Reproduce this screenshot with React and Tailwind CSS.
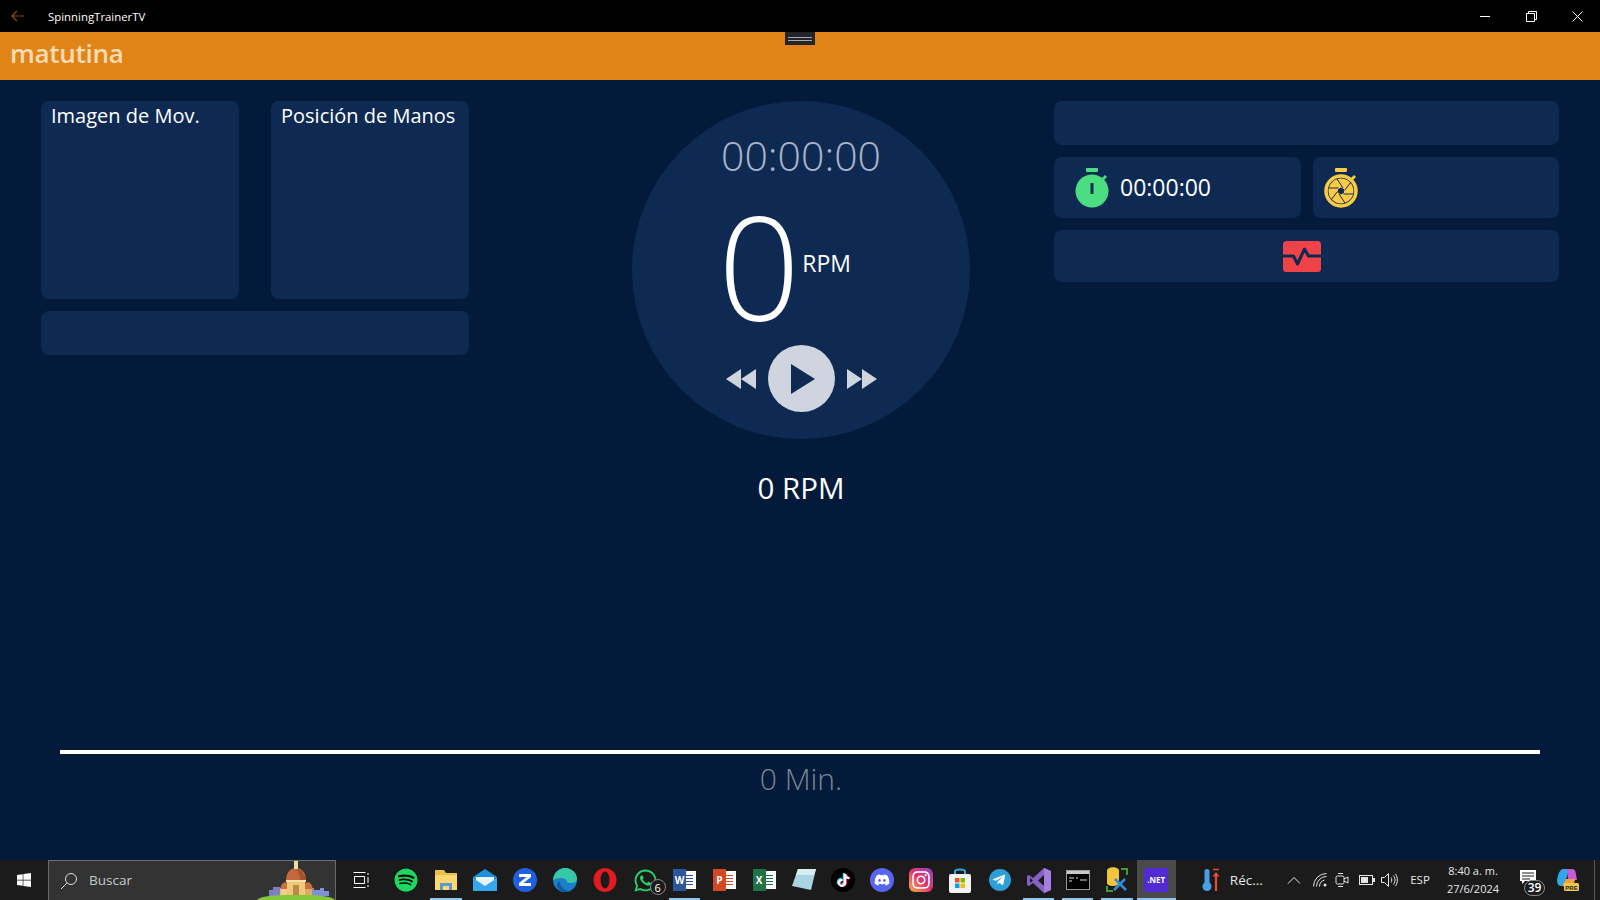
import { FaSpotify, FaWhatsapp, FaTiktok, FaDiscord, FaInstagram, FaTelegramPlane, FaWindows } from 'react-icons/fa'

const font = { fontFamily: '"Open Sans", sans-serif' }

function GreenWatch() {
  return (
    <svg width="34" height="40" viewBox="0 0 34 40">
      <rect x="11" y="0" width="12" height="4" rx="1" fill="#4ade80" />
      <path d="M27 10l3-3 2 2-3 3z" fill="#4ade80" />
      <circle cx="17" cy="23" r="16.5" fill="#4ade80" />
      <rect x="15.500" y="15" width="3" height="11" fill="#0f2a52" />
    </svg>
  )
}

function YellowWatch() {
  return (
    <svg width="34" height="40" viewBox="0 0 34 40">
      <rect x="11" y="0" width="12" height="4" rx="1" fill="#facc45" />
      <path d="M27 10l3-3 2 2-3 3z" fill="#facc45" />
      <circle cx="17" cy="23" r="15" fill="#0f2a52" stroke="#facc45" strokeWidth="3.500" />
      <circle cx="17" cy="23" r="12.500" fill="#facc45" />
      <g stroke="#0f2a52" strokeWidth="1">
        <path d="M19 20L13 11" />
        <path d="M20.500 22.500L27 14" />
        <path d="M19.500 26L29 26" />
        <path d="M15 26L21 35" />
        <path d="M13.500 23.500L7 32" />
        <path d="M14.500 20L5 20" />
      </g>
      <path d="M17 19.500l3 1.750v3.500l-3 1.750-3-1.750v-3.500z" fill="#0f2a52" />
    </svg>
  )
}

function HeartRate() {
  return (
    <svg width="38" height="31" viewBox="0 0 38 31">
      <rect x="0" y="0" width="38" height="31" rx="3.500" fill="#ef4349" />
      <path d="M0 15h10.500l4 8 7-15 4 7H38" fill="none" stroke="#0f2a52" strokeWidth="3" strokeLinejoin="round" />
    </svg>
  )
}

function Church() {
  return (
    <svg width="78" height="41" viewBox="0 0 78 41">
      <path d="M12 37V31h4v-3h7v3h5v6z" fill="#7d7fc4" />
      <path d="M52 37V29h5v2h6v-2h4v3h5v5z" fill="#7f92d6" />
      <rect x="23" y="29" width="32" height="8" fill="#e3bc6a" />
      <rect x="24" y="29" width="9" height="8" fill="#efd28a" />
      <rect x="46" y="29" width="9" height="8" fill="#d9ae5e" />
      <path d="M23.500 30c0-9 10-9 10 0z" fill="#c9713e" />
      <path d="M45.500 30c0-9 10-9 10 0z" fill="#c9713e" />
      <rect x="30" y="21" width="18" height="16" fill="#edc979" />
      <path d="M29 21c0-16 20-16 20 0z" fill="#c4673a" />
      <path d="M39 9c5 2 9 6 10 12h-6c0-5-2-9-4-12z" fill="#a84f2e" />
      <rect x="29" y="21" width="20" height="2" fill="#f6e2a8" />
      <rect x="37" y="2" width="4" height="8" fill="#eadfa8" />
      <rect x="36" y="26" width="6" height="10" fill="#b98a4a" />
      <path d="M0 41c4-4 16-5 39-5s35 1 39 5z" fill="#86c83c" />
    </svg>
  )
}

function Folder() {
  return (
    <svg width="24" height="22" viewBox="0 0 24 22">
      <path d="M1 1h9l2 3h11v17H1z" fill="#eabf4a" />
      <rect x="1" y="6" width="22" height="15" fill="#fbd970" />
      <rect x="6" y="14" width="12" height="7" fill="#5e9ad6" />
      <rect x="9" y="17" width="6" height="4" fill="#fbd970" />
    </svg>
  )
}

function Mail() {
  return (
    <svg width="26" height="22" viewBox="0 0 26 22">
      <path d="M1 8L13 0l12 8v14H1z" fill="#1c8fdc" />
      <path d="M4 8h18v5l-9 5-9-5z" fill="#e8f4fb" />
      <path d="M1 9l12 8 12-8v13H1z" fill="#37a8ee" />
    </svg>
  )
}

function ZoomZ() {
  return (
    <svg width="24" height="24" viewBox="0 0 24 24">
      <circle cx="12" cy="12" r="12" fill="#2060e0" />
      <path d="M6 6h12v3l-7.500 6H18v3H6v-3l7.500-6H6z" fill="#fff" />
    </svg>
  )
}

function Edge() {
  return (
    <svg width="24" height="24" viewBox="0 0 24 24">
      <circle cx="12" cy="12" r="12" fill="#1c7fc8" />
      <path d="M0 12C1 4 7 0 12 0c7 0 12 5 12 11 0 3-3 4-6 4-4 0-5-1-4-3-5-3-10-2-14 0z" fill="#37c8a8" />
      <path d="M7 14c0 5 5 9 10 9-4 2-9 1-12-3-2-3-1-6 2-6z" fill="#0c5aa6" />
    </svg>
  )
}

function Opera() {
  return (
    <svg width="24" height="24" viewBox="0 0 24 24">
      <ellipse cx="12" cy="12" rx="11.500" ry="12" fill="#e01b22" />
      <ellipse cx="12" cy="12" rx="4.500" ry="8.500" fill="#1b1b1b" />
    </svg>
  )
}

function OfficeDoc({ bg, letter, lines }) {
  return (
    <div className="relative w-[23px] h-[22px]">
      <div className="absolute right-0 top-[2px] w-[14px] h-[18px] bg-white flex flex-col justify-center gap-[2px] px-[3px]">
        <div className="h-[1px]" style={{ background: lines }} />
        <div className="h-[1px]" style={{ background: lines }} />
        <div className="h-[1px]" style={{ background: lines }} />
        <div className="h-[1px]" style={{ background: lines }} />
      </div>
      <div className="absolute left-0 top-0 w-[13px] h-[22px] flex items-center justify-center text-white text-[10px] font-bold" style={{ background: bg }}>
        {letter}
      </div>
    </div>
  )
}

function Notepad() {
  return (
    <svg width="26" height="24" viewBox="0 0 26 24">
      <path d="M7 1h18l-5 21-19-4z" fill="#a9d5e2" />
      <path d="M7 1h18l-2 6H5z" fill="#d6edf2" />
    </svg>
  )
}

function Store() {
  return (
    <svg width="24" height="25" viewBox="0 0 24 25">
      <path d="M7 6V3c0-2 10-2 10 0v3" fill="none" stroke="#36a8e0" strokeWidth="2" />
      <rect x="1" y="6" width="22" height="19" rx="2" fill="#f2f2f2" />
      <rect x="7" y="10" width="4.500" height="4.500" fill="#f25022" />
      <rect x="12.500" y="10" width="4.500" height="4.500" fill="#7fba00" />
      <rect x="7" y="15.500" width="4.500" height="4.500" fill="#00a4ef" />
      <rect x="12.500" y="15.500" width="4.500" height="4.500" fill="#ffb900" />
    </svg>
  )
}

function VisualStudio() {
  return (
    <svg width="24" height="25" viewBox="0 0 24 25">
      <path d="M17 0l7 3v19l-7 3-11-10-4 3-2-1V8l2-1 4 3z" fill="#8661c5" />
      <path d="M3 10l3 2.500-3 2.500z" fill="#1b1b1b" />
      <path d="M17 0l7 3v19l-7 3z" fill="#a47fe0" />
      <path d="M17 7l-6 5.500 6 5.500z" fill="#1b1b1b" />
    </svg>
  )
}

function Cmd() {
  return (
    <svg width="24" height="20" viewBox="0 0 24 20">
      <rect x="0.500" y="0.500" width="23" height="19" fill="#000" stroke="#9a9a9a" />
      <rect x="1" y="1" width="22" height="3" fill="#c8c8c8" />
      <path d="M3 8h5M10 8h2M14 10h7M3 11h3" stroke="#ddd" strokeWidth="1.200" />
    </svg>
  )
}

function DbTool() {
  return (
    <svg width="24" height="26" viewBox="0 0 24 26">
      <path d="M2 4c0-5 12-5 12 0v12c0 4-12 4-12 0z" fill="#f3c53c" />
      <path d="M16 2h6v6M2 19v5h6" fill="none" stroke="#3d9a3d" strokeWidth="2" />
      <path d="M9 23l11-11M10 12l11 11" stroke="#2e8ed6" strokeWidth="2.600" />
    </svg>
  )
}

function DotNet() {
  return (
    <div className="w-[24px] h-[24px] bg-[#512bd4] flex items-center justify-center text-[8px] font-bold text-white">.NET</div>
  )
}

function Thermo() {
  return (
    <svg width="18" height="24" viewBox="0 0 18 24">
      <rect x="2.500" y="1" width="5" height="16" rx="2.500" fill="#4aa0e8" />
      <circle cx="5" cy="18.500" r="4.500" fill="#4aa0e8" />
      <path d="M14 23V7" stroke="#e84a3a" strokeWidth="2.200" />
      <path d="M10.500 8.500L14 4l3.500 4.500z" fill="#e84a3a" />
      <path d="M11 1.500h6" stroke="#e84a3a" strokeWidth="1.500" />
    </svg>
  )
}

function Copilot() {
  return (
    <svg width="22" height="24" viewBox="0 0 22 24">
      <path d="M6 1h6l-4 14c-1 2-2 3-4 3C1 18 0 15 0 12 1 6 3 1 6 1z" fill="#2fa8e8" />
      <path d="M10 1h5c2 0 3 1 3.500 3l1.500 8h-9z" fill="#c85ad8" />
      <path d="M5 18l4-7h9c0 4-3 8-7 8z" fill="#f2a23c" />
      <rect x="7" y="15" width="15" height="8" rx="1.500" fill="#f2c84b" />
      <text x="14.500" y="21.500" textAnchor="middle" fontSize="6" fontWeight="700" fill="#222" fontFamily="Liberation Sans">PRE</text>
    </svg>
  )
}

function Slot({ active, highlight, narrow, children }) {
  return (
    <div className={`relative h-10 flex items-center justify-center ${narrow ? 'w-[39.2px]' : 'w-[39.8px]'} ${highlight ? 'bg-[#4a4a4a]' : ''}`}>
      {children}
      {active && <div className={`absolute bottom-0 h-[2px] bg-[#8fc6ee] ${highlight ? 'inset-x-0' : 'inset-x-[4px]'}`} />}
    </div>
  )
}

export default function App() {
  return (
    <div className="w-[1600px] h-[900px] overflow-hidden flex flex-col bg-[#031a3a] text-white" style={font}>
      {/* Title bar */}
      <div className="h-8 bg-black flex items-center shrink-0">
        <svg width="14" height="12" viewBox="0 0 14 12" className="ml-[11px]">
          <path d="M13 6H1.500M6 1L1 6l5 5" fill="none" stroke="#8a4f12" strokeWidth="1.200" />
        </svg>
        <span className="ml-[23px] text-[11.400px] text-white relative top-[1px]">SpinningTrainerTV</span>
        <div className="ml-auto flex items-center">
          <div className="w-[46px] h-8 flex items-center justify-center">
            <div className="w-[10px] h-[1px] bg-white" />
          </div>
          <div className="w-[46px] h-8 flex items-center justify-center">
            <svg width="11" height="11" viewBox="0 0 11 11">
              <path d="M0.500 2.500h8v8h-8zM2.500 2.500v-2h8v8h-2" fill="none" stroke="#fff" />
            </svg>
          </div>
          <div className="w-[46px] h-8 flex items-center justify-center">
            <svg width="11" height="11" viewBox="0 0 11 11">
              <path d="M0.500 0.500l10 10M10.500 0.500l-10 10" stroke="#fff" />
            </svg>
          </div>
        </div>
      </div>

      {/* Header */}
      <div className="relative h-12 bg-[#e08418] flex items-center shrink-0 pl-[10px]">
        <span className="text-[26px] font-semibold text-[#fcdcb4] leading-none relative top-[-3px] tracking-[-0.3px]">matutina</span>
        <div className="absolute left-[785px] top-0 w-[30px] h-[13px] bg-[#23252a] flex flex-col items-center justify-center gap-[2px]">
          <div className="w-[24px] h-[1px] bg-[#aaaaaa]" />
          <div className="w-[24px] h-[1px] bg-[#aaaaaa]" />
        </div>
      </div>

      {/* Main */}
      <div className="flex-1 flex flex-col">
        <div className="h-[670px] flex items-start pt-[21px] pl-[41px] shrink-0">
          <div className="w-[428px] shrink-0 flex flex-col gap-3">
            <div className="flex justify-between">
              <div className="w-[198px] h-[198px] bg-[#0f2a52] rounded-lg px-[10px] text-[20px]">Imagen de Mov.</div>
              <div className="w-[198px] h-[198px] bg-[#0f2a52] rounded-lg px-[10px] text-[20px]">Posición de Manos</div>
            </div>
            <div className="h-[44px] bg-[#0f2a52] rounded-lg" />
          </div>

          <div className="ml-[163px] w-[338px] shrink-0 flex flex-col items-center">
            <div className="w-[338px] h-[338px] rounded-full bg-[#0f2a52] flex flex-col items-center">
              <div className="mt-[26px] text-[41px] leading-[56px] font-light text-[#a9b5c8]">00:00:00</div>
              <div className="flex items-start mt-[23px] h-[139px] pl-[86px] w-full justify-start">
                <span className="text-[144px] leading-[118px] font-[350]">0</span>
                <span className="ml-[2px] mt-[41px] text-[23px] leading-[32px]">RPM</span>
              </div>
              <div className="flex items-center gap-[12px]">
                <svg width="30" height="20" viewBox="0 0 30 20">
                  <path d="M15 0v20L0 10zM30 0v20L15 10z" fill="#cfd4de" />
                </svg>
                <div className="w-[67px] h-[67px] rounded-full bg-[#cfd4de] flex items-center justify-center">
                  <svg width="24" height="30" viewBox="0 0 24 30" className="ml-[3px]">
                    <path d="M0 0l24 15L0 30z" fill="#0f2a52" />
                  </svg>
                </div>
                <svg width="30" height="20" viewBox="0 0 30 20">
                  <path d="M0 0v20l15-10zM15 0v20l15-10z" fill="#cfd4de" />
                </svg>
              </div>
            </div>
            <div className="mt-[29px] text-[29.500px] leading-[40px]">0 RPM</div>
          </div>

          <div className="ml-[84px] w-[505px] shrink-0 flex flex-col gap-3">
            <div className="h-[44px] bg-[#0f2a52] rounded-lg" />
            <div className="flex gap-3">
              <div className="w-[247px] h-[61px] bg-[#0f2a52] rounded-lg flex items-center pl-[21px]">
                <GreenWatch />
                <span className="ml-[11px] text-[23px]">00:00:00</span>
              </div>
              <div className="w-[246px] h-[61px] bg-[#0f2a52] rounded-lg flex items-center pl-[11px]">
                <YellowWatch />
              </div>
            </div>
            <div className="h-[52px] bg-[#0f2a52] rounded-lg flex items-center justify-center">
              <div className="mr-[9px]">
                <HeartRate />
              </div>
            </div>
          </div>
        </div>

        <div className="mx-[60px] h-1 bg-white" />
        <div className="text-center text-[30px] leading-[40px] font-light text-[#7c8694] mt-[5px] pl-[2px]">0 Min.</div>
      </div>

      {/* Taskbar */}
      <div className="h-10 bg-[#1b1b1b] flex items-center shrink-0 text-[#e6e6e6]">
        <div className="w-12 h-10 flex items-center justify-center">
          <FaWindows className="text-white w-[16px] h-[16px]" />
        </div>
        <div className="relative w-[288px] h-10 bg-[#333333] border-x border-t border-[#6b6b6b] flex items-center pl-[11px] overflow-hidden">
          <svg width="18" height="18" viewBox="0 0 18 18">
            <circle cx="11" cy="7" r="5.500" fill="none" stroke="#ddd" />
            <path d="M7 11L1 17" stroke="#ddd" />
          </svg>
          <span className="ml-[11px] text-[13.500px] text-[#c8c8c8]">Buscar</span>
          <div className="absolute right-[0px] bottom-0">
            <Church />
          </div>
        </div>
        <div className="w-[50px] h-10 flex items-center justify-center">
          <svg width="16" height="16" viewBox="0 0 16 16">
            <path d="M0.500 0.500h12M0.500 15.500h12M1.500 4.500h10v7h-10zM15 1v2M15 5v6M15 13v2" fill="none" stroke="#fff" />
          </svg>
        </div>
        <Slot>
          <div className="bg-black rounded-full w-[24px] h-[24px]">
            <FaSpotify className="text-[#1ed760] w-[24px] h-[24px]" />
          </div>
        </Slot>
        <Slot active><Folder /></Slot>
        <Slot><Mail /></Slot>
        <Slot><ZoomZ /></Slot>
        <Slot><Edge /></Slot>
        <Slot><Opera /></Slot>
        <Slot>
          <FaWhatsapp className="text-[#25d366] w-[25px] h-[25px] relative left-[1px]" />
          <div className="absolute right-[-1px] bottom-[5px] w-[16px] h-[16px] rounded-full bg-[#1b1b1b] border border-[#888] flex items-center justify-center text-[11px] text-white leading-none">6</div>
        </Slot>
        <Slot active><OfficeDoc bg="#2b579a" letter="W" lines="#2b579a" /></Slot>
        <Slot><OfficeDoc bg="#d24726" letter="P" lines="#d24726" /></Slot>
        <Slot><OfficeDoc bg="#217346" letter="X" lines="#217346" /></Slot>
        <Slot narrow><Notepad /></Slot>
        <Slot narrow>
          <div className="w-[24px] h-[24px] rounded-full bg-black flex items-center justify-center relative">
            <FaTiktok className="absolute w-[13px] h-[13px] text-[#25f4ee] left-[5px] top-[5px]" />
            <FaTiktok className="absolute w-[13px] h-[13px] text-[#fe2c55] left-[7px] top-[6px]" />
            <FaTiktok className="absolute w-[13px] h-[13px] text-white left-[6px] top-[5.500px]" />
          </div>
        </Slot>
        <Slot narrow>
          <div className="w-[24px] h-[24px] rounded-full bg-[#5865f2] flex items-center justify-center">
            <FaDiscord className="text-white w-[16px] h-[16px]" />
          </div>
        </Slot>
        <Slot narrow>
          <div className="w-[24px] h-[24px] rounded-md bg-gradient-to-tr from-[#f6a93b] via-[#e1306c] to-[#8a3ac4] flex items-center justify-center">
            <FaInstagram className="text-white w-[20px] h-[20px]" />
          </div>
        </Slot>
        <Slot narrow><Store /></Slot>
        <Slot narrow>
          <div className="w-[22px] h-[22px] rounded-full bg-[#2a9fd8] flex items-center justify-center">
            <FaTelegramPlane className="text-white w-[14px] h-[14px] relative left-[-1px]" />
          </div>
        </Slot>
        <Slot narrow active><VisualStudio /></Slot>
        <Slot narrow active><Cmd /></Slot>
        <Slot narrow active><DbTool /></Slot>
        <Slot narrow active highlight><DotNet /></Slot>

        <div className="ml-[26px] flex items-center">
          <Thermo />
          <span className="ml-[10px] text-[13.500px]">Réc...</span>
        </div>

        <div className="ml-auto flex items-center h-10">
          <div className="w-[24px] mr-[2px] flex justify-center">
            <svg width="14" height="8" viewBox="0 0 14 8"><path d="M1 7.500l6-6 6 6" fill="none" stroke="#e6e6e6" /></svg>
          </div>
          <div className="w-[24px] flex justify-center">
            <svg width="14" height="14" viewBox="0 0 14 14"><path d="M0.500 13.500a13 13 0 0 1 13-13M3.500 13.500a10 10 0 0 1 10-10M6.500 13.500a7 7 0 0 1 5-6.500" fill="none" stroke="#e6e6e6" /><circle cx="12" cy="12" r="1.500" fill="#e6e6e6" /></svg>
          </div>
          <div className="w-[23px] pr-[4px] flex justify-center">
            <svg width="14" height="16" viewBox="0 0 14 16"><rect x="1" y="4" width="8" height="8" rx="1.500" fill="none" stroke="#e6e6e6" /><path d="M9 7l4-2v6l-4-2M3 1.500h5M3 14.500h5" fill="none" stroke="#e6e6e6" /></svg>
          </div>
          <div className="w-[24px] flex justify-center">
            <svg width="16" height="10" viewBox="0 0 16 10"><rect x="0.500" y="0.500" width="13" height="9" fill="none" stroke="#e6e6e6" /><rect x="2" y="2" width="7" height="6" fill="#e6e6e6" /><rect x="14" y="3" width="2" height="4" fill="#e6e6e6" /></svg>
          </div>
          <div className="w-[24px] pr-[4px] flex justify-center">
            <svg width="17" height="14" viewBox="0 0 17 14"><path d="M0.500 4.500h3l4-4v13l-4-4h-3zM10 4.500c1 1.500 1 3.500 0 5M12.500 2.500c2 3 2 6 0 9M14.500 1c2.500 4 2.500 8 0 12" fill="none" stroke="#e6e6e6" /></svg>
          </div>
          <span className="w-[34px] text-center text-[11.500px]">ESP</span>
          <div className="w-[72px] flex flex-col items-center text-[11px] leading-[18px]">
            <span>8:40 a. m.</span>
            <span>27/6/2024</span>
          </div>
          <div className="relative w-[38px] h-10 flex items-center justify-center">
            <svg width="16" height="14" viewBox="0 0 16 14" className="relative top-[-3px]"><path d="M0 0h16v11H5l-3 3v-3H0z" fill="#fff" /><path d="M2 3h12M2 6h12M2 9h8" stroke="#1b1b1b" /></svg>
            <div className="absolute left-[15px] top-[20px] w-[21px] h-[16px] rounded-full bg-[#1b1b1b] border border-[#888] flex items-center justify-center text-[12px] text-white leading-none font-semibold">39</div>
          </div>
          <div className="w-[42px] flex justify-center mr-[5px]">
            <Copilot />
          </div>
          <div className="w-px h-10 bg-[#555555] mr-[5px]" />
        </div>
      </div>
    </div>
  )
}
